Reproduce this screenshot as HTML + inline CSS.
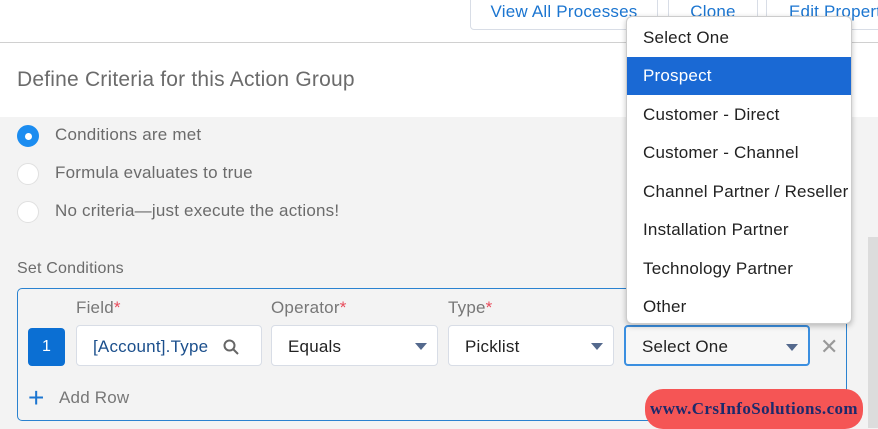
<!DOCTYPE html>
<html><head><style>
*{box-sizing:border-box;margin:0;padding:0}
body{width:878px;height:428px;overflow:hidden;position:relative;background:#f3f3f3;font-family:"Liberation Sans",sans-serif;color:#3e3e3c;letter-spacing:0.2px}
.a{position:absolute;white-space:nowrap}
.top{left:0;top:0;width:878px;height:117px;background:#fff}
.line{left:0;top:42px;width:878px;height:1px;background:#d0d0d0}
.btn{top:-4px;height:34px;border:1px solid #d8dde6;border-radius:4px;background:#fff;color:#1b75d0;font-size:17px;line-height:30px;text-align:center;overflow:hidden}
.radio{width:22px;height:22px;border-radius:50%;background:#fff;border:1px solid #e0e0e0;left:17px}
.lbl{font-size:17px;color:#6b6b6b}
.inp{top:325px;height:41px;background:#fff;border:1px solid #d8dde6;border-radius:4px;font-size:17px;line-height:41px;padding-left:16px;color:#222}
.tri{position:absolute;right:10px;top:17px;width:0;height:0;border-left:6px solid transparent;border-right:6px solid transparent;border-top:7px solid #54698d}
.flab{top:298px;font-size:17px;color:#777}
.flab b{color:#e84b5b;font-weight:normal}
.dd{left:626px;top:16px;width:226px;height:308px;background:#fff;border:1px solid #ccc;border-radius:6px;box-shadow:0 2px 6px rgba(0,0,0,.25)}
.it{position:absolute;left:0;width:224px;height:38px;line-height:38px;padding-left:16px;font-size:17px;color:#222;white-space:nowrap;overflow:hidden}
</style></head><body>
<div class="a top"></div>
<div class="a line"></div>
<div class="a btn" style="left:470px;width:188px">View All Processes</div>
<div class="a btn" style="left:668px;width:90px">Clone</div>
<div class="a btn" style="left:766px;width:130px;text-align:left;padding-left:22px">Edit Properties</div>
<div class="a" style="left:17px;top:68px;font-size:21px;color:#6b6b6b">Define Criteria for this Action Group</div>
<div class="a radio" style="top:125px;background:#1b8cf0;border-color:#1b8cf0"><div class="a" style="left:7px;top:7px;width:7px;height:7px;border-radius:50%;background:#fff"></div></div>
<div class="a radio" style="top:163px"></div>
<div class="a radio" style="top:201px"></div>
<div class="a lbl" style="left:55px;top:125px">Conditions are met</div>
<div class="a lbl" style="left:55px;top:163px">Formula evaluates to true</div>
<div class="a lbl" style="left:55px;top:201px">No criteria—just execute the actions!</div>
<div class="a" style="left:17px;top:260px;font-size:16px;color:#6b6b6b">Set Conditions</div>
<div class="a" style="left:17px;top:288px;width:830px;height:133px;border:1px solid #2a82d0;border-radius:5px"></div>
<div class="a flab" style="left:76px">Field<b>*</b></div>
<div class="a flab" style="left:271px">Operator<b>*</b></div>
<div class="a flab" style="left:448px">Type<b>*</b></div>
<div class="a" style="left:28px;top:328px;width:37px;height:38px;background:#0b6fd3;border-radius:4px;color:#fff;font-size:16px;text-align:center;line-height:38px">1</div>
<div class="a inp" style="left:76px;width:186px;color:#1b4f8c">[Account].Type
<svg class="a" style="left:146px;top:13px" width="16" height="16" viewBox="0 0 16 16"><circle cx="6.5" cy="6.5" r="5" fill="none" stroke="#666" stroke-width="2"/><path d="M10 10l5 5" stroke="#666" stroke-width="2"/></svg></div>
<div class="a inp" style="left:271px;width:167px">Equals<div class="tri"></div></div>
<div class="a inp" style="left:448px;width:166px">Picklist<div class="tri"></div></div>
<div class="a inp" style="left:624px;width:186px;border:2px solid #3b8fe0;background:#f7f7f7;line-height:39px">Select One<div class="tri"></div></div>
<div class="a" style="left:820px;top:334px;font-size:22px;color:#999">✕</div>
<div class="a" style="left:28px;top:384px;font-size:28px;color:#1b75d0;line-height:28px">+</div>
<div class="a" style="left:59px;top:388px;font-size:17px;color:#777">Add Row</div>
<div class="a" style="left:868px;top:237px;width:10px;height:191px;background:#dcdcdc"></div>
<div class="a dd">
<div class="it" style="top:2px">Select One</div>
<div class="it" style="top:40px;background:#1a69d4;color:#fff">Prospect</div>
<div class="it" style="top:79px">Customer - Direct</div>
<div class="it" style="top:117px">Customer - Channel</div>
<div class="it" style="top:156px">Channel Partner / Reseller</div>
<div class="it" style="top:194px">Installation Partner</div>
<div class="it" style="top:233px">Technology Partner</div>
<div class="it" style="top:271px">Other</div>
</div>
<div class="a" style="left:645px;top:389px;width:218px;height:40px;background:#f55555;border-radius:18px;color:#1d2a6b;font-family:'Liberation Serif',serif;font-weight:bold;font-size:17px;letter-spacing:0.4px;line-height:40px;text-align:center">www.CrsInfoSolutions.com</div>
</body></html>
